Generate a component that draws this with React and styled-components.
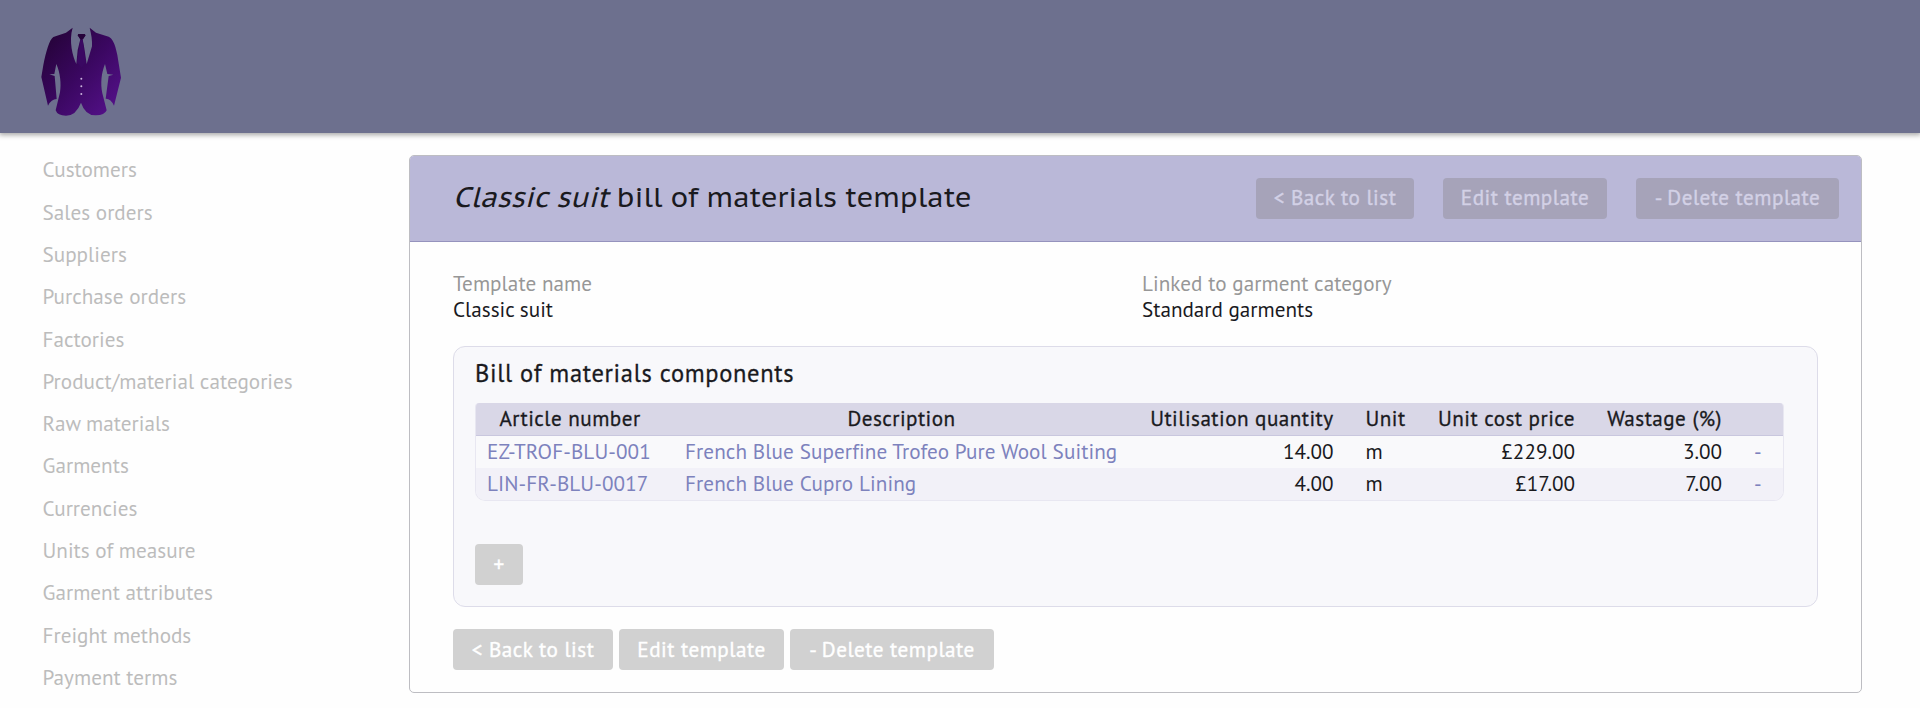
import React from 'react';
import styled, { createGlobalStyle, css } from 'styled-components';

const GlobalStyle = createGlobalStyle`
  * { box-sizing: border-box; }
  body {
    margin: 0;
    background: #fefefe;
    color: #1a1a1e;
    font-family: "PT Sans", "Noto Sans CJK SC", "Noto Sans", sans-serif;
    font-size: 21.15px;
    overflow: hidden;
  }
`;

const Page = styled.div`
  height: 708px;
  display: flex;
  flex-direction: column;
`;

const TopBar = styled.header`
  flex: none;
  height: 133px;
  padding: 15px 0 0 30px;
  background: #6d708e;
  box-shadow: 0 1px 5px 1px rgba(0, 0, 0, 0.35);
`;

const Logo = styled.svg`
  display: block;
  width: 110px;
  height: 120px;
`;

const Body = styled.div`
  display: flex;
  align-items: flex-start;
`;

const Sidebar = styled.nav`
  flex: none;
  width: 409px;
  padding: 15.4px 0 0 42.5px;
`;

const NavLink = styled.a`
  display: block;
  height: 42.3px;
  line-height: 42.3px;
  color: #bcbcbc;
  letter-spacing: 0.02px;
  white-space: nowrap;
`;

const Card = styled.main`
  width: 1453px;
  height: 538px;
  margin-top: 22px;
  border: 1px solid #bdbdc2;
  border-radius: 5px;
  overflow: hidden;
`;

const CardHeader = styled.div`
  display: flex;
  align-items: center;
  justify-content: space-between;
  height: 86px;
  padding: 0 22px 0 43px;
  background: #bab8d8;
  border-bottom: 1px solid #9593bd;
`;

const Title = styled.h1`
  margin: 0;
  padding-bottom: 4px;
  font-family: "PT Sans Caption", "PT Sans", "Noto Sans CJK SC", sans-serif;
  font-size: 28.2px;
  font-weight: 400;
  line-height: 36px;
  white-space: pre;
`;

const ButtonRow = styled.div`
  display: flex;
  gap: ${({ $gap }) => $gap}px;
`;

const Button = styled.button`
  display: flex;
  align-items: center;
  justify-content: center;
  width: ${({ $width }) => $width}px;
  height: 41px;
  padding: 0 0 ${({ $tinted }) => ($tinted ? 3 : 1)}px;
  border: 0;
  border-radius: 4px;
  background: ${({ $tinted }) => ($tinted ? '#a6a3b9' : '#d1d1d1')};
  color: ${({ $tinted }) => ($tinted ? '#d3d1e6' : '#ffffff')};
  font: 400 21.15px/28px "PT Sans", "Noto Sans CJK SC", sans-serif;
  letter-spacing: 0.5px;
  -webkit-text-stroke: 0.4px currentColor;
  white-space: nowrap;
`;

const CardBody = styled.div`
  padding: 27.5px 43px 0 43px;
`;

const Fields = styled.dl`
  display: grid;
  grid-template-columns: 689px 1fr;
  margin: 0;
  line-height: 26.5px;
`;

const Label = styled.dt`
  color: #979797;
  letter-spacing: 0.06px;
`;

const Value = styled.dd`
  margin: 0;
`;

const Panel = styled.section`
  height: 261px;
  margin: 23px 0 22px;
  padding: 10px 0 0 21px;
  border: 1px solid #dddce9;
  border-radius: 12px;
  background: #f8f8fb;
`;

const PanelTitle = styled.h2`
  margin: 0 0 14px;
  font-size: 24.5px;
  font-weight: 400;
  line-height: 32px;
  letter-spacing: 0.68px;
  -webkit-text-stroke: 0.3px currentColor;
`;

const Table = styled.div`
  width: 1309px;
  margin-bottom: 43px;
  border: 1px solid #e8e7f1;
  border-top: 0;
  border-radius: 4px 4px 10px 10px;
  overflow: hidden;
`;

const Row = styled.div`
  display: grid;
  grid-template-columns: 193px 465px 215.5px 71px 170.5px 147px 1fr;
  height: 32px;
  line-height: 31px;
  background: ${({ $striped }) => ($striped ? '#f2f1f8' : '#f9f9fb')};
  ${({ $head }) =>
    $head &&
    css`
      height: 33px;
      line-height: 31px;
      letter-spacing: 0.47px;
      -webkit-text-stroke: 0.3px currentColor;
      background: #d9d7e7;
      border-bottom: 1px solid #c9c7de;
    `}
`;

const Cell = styled.div`
  padding: 0 16px 0 ${({ $first }) => ($first ? 11 : 16)}px;
  text-align: ${({ $align = 'left' }) => $align};
  color: ${({ $link }) => ($link ? '#7d82bd' : 'inherit')};
  letter-spacing: ${({ $link }) => ($link ? '0.1px' : 'inherit')};
  white-space: nowrap;
`;

const NAV = [
  'Customers', 'Sales orders', 'Suppliers', 'Purchase orders', 'Factories',
  'Product/material categories', 'Raw materials', 'Garments', 'Currencies',
  'Units of measure', 'Garment attributes', 'Freight methods', 'Payment terms',
];

const COMPONENTS = [
  ['EZ-TROF-BLU-001', 'French Blue Superfine Trofeo Pure Wool Suiting', '14.00', 'm', '£229.00', '3.00'],
  ['LIN-FR-BLU-0017', 'French Blue Cupro Lining', '4.00', 'm', '£17.00', '7.00'],
];

function SuitLogo() {
  return (
    <Logo viewBox="0 0 330 360" aria-label="Suit">
      <defs>
        <linearGradient id="cloth" x1="0" y1="0" x2="1" y2="1">
          <stop offset="0.1" stopColor="#26033a" />
          <stop offset="0.5" stopColor="#3a0760" />
          <stop offset="0.9" stopColor="#521086" />
        </linearGradient>
      </defs>
      <path
        fill="url(#cloth)"
        d="M128 38 L108 53 L70 66 C58 74 48 110 40 150 L34 186 L54 272 Q64 252 80 252 L74 183 L58 178 L73 177 L79 147 C91 174 94 207 90 232 L77 286 Q82 302 108 302 Q138 302 153 263 Q166 302 198 301 Q224 301 230 286 L217 235 C211 205 214 174 225 147 L232 177 L250 179 L236 183 L227 251 Q242 250 252 272 L273 188 L262 120 C255 84 246 69 236 65 L198 53 L179 38 C184 58 187 76 186 94 L170 147 L163 100 L158 73 L166 61 L163 57 L146 57 L143 61 L151 73 L143 105 L139 147 C128 124 116 78 128 38 Z"
      />
      <path fill="#26033a" d="M145 57 H164 L167 61 L159 73 H151 L143 61 Z" />
      <path fill="#3a0862" d="M151 75 H158 L167 143 L155 158 L141 143 Z" />
      <g fill="#c9b3dc">
        <circle cx="154" cy="191" r="3" />
        <circle cx="154" cy="214" r="3" />
        <circle cx="154" cy="237" r="3" />
      </g>
    </Logo>
  );
}

function TemplateActions({ tinted, gap, widths }) {
  return (
    <ButtonRow $gap={gap}>
      <Button $tinted={tinted} $width={widths[0]}>&lt; Back to list</Button>
      <Button $tinted={tinted} $width={widths[1]}>Edit template</Button>
      <Button $tinted={tinted} $width={widths[2]}>- Delete template</Button>
    </ButtonRow>
  );
}

export default function App() {
  return (
    <Page>
      <GlobalStyle />
      <TopBar><SuitLogo /></TopBar>
      <Body>
        <Sidebar>
          {NAV.map((item) => <NavLink key={item}>{item}</NavLink>)}
        </Sidebar>
        <Card>
          <CardHeader>
            <Title><em>Classic suit</em> bill of materials template</Title>
            <TemplateActions tinted gap={29} widths={[158, 164, 203]} />
          </CardHeader>
          <CardBody>
            <Fields>
              <Label>Template name</Label>
              <Label>Linked to garment category</Label>
              <Value>Classic suit</Value>
              <Value>Standard garments</Value>
            </Fields>
            <Panel>
              <PanelTitle>Bill of materials components</PanelTitle>
              <Table>
                <Row $head>
                  <Cell $first $align="center">Article number</Cell>
                  <Cell $align="center">Description</Cell>
                  <Cell $align="right">Utilisation quantity</Cell>
                  <Cell>Unit</Cell>
                  <Cell $align="right">Unit cost price</Cell>
                  <Cell $align="right">Wastage (%)</Cell>
                  <Cell />
                </Row>
                {COMPONENTS.map(([article, description, quantity, unit, price, wastage], i) => (
                  <Row key={article} $striped={i % 2 === 1}>
                    <Cell $first $link>{article}</Cell>
                    <Cell $link>{description}</Cell>
                    <Cell $align="right">{quantity}</Cell>
                    <Cell>{unit}</Cell>
                    <Cell $align="right">{price}</Cell>
                    <Cell $align="right">{wastage}</Cell>
                    <Cell $link>-</Cell>
                  </Row>
                ))}
              </Table>
              <Button $width={48}>+</Button>
            </Panel>
            <TemplateActions gap={6} widths={[160, 165, 204]} />
          </CardBody>
        </Card>
      </Body>
    </Page>
  );
}
